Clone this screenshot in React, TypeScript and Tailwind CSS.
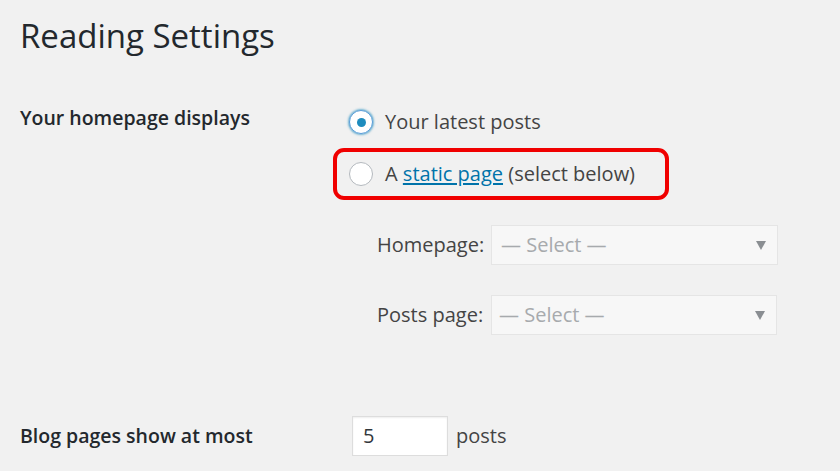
function Arrow() {
  return (
    <svg width="10" height="9" viewBox="0 0 10 9" className="shrink-0">
      <path d="M0 0h10L5 9z" fill="#8a8e92" />
    </svg>
  );
}

export default function App() {
  return (
    <div className="min-h-screen bg-[#f1f1f1] px-5 text-[#444] [font-family:'Open_Sans',sans-serif]">
      <h1 className="pt-[12px] text-[33px] leading-[48px] text-[#23282d]">Reading Settings</h1>

      <div className="mt-[47px] flex">
        <div className="w-[332px] text-[19.5px] font-semibold leading-[22px] text-[#23282d]">Your homepage displays</div>
        <div className="flex flex-col">
          <label className="-ml-[3px] mt-[3px] flex h-[24px] items-center gap-3 text-[20px]">
            <span className="flex h-[24px] w-[24px] items-center justify-center rounded-full border border-[#5b9dd9] bg-white shadow-[0_0_2px_1px_rgba(30,140,190,0.6)]">
              <span className="h-[9px] w-[9px] rounded-full bg-[#1e8cbe]" />
            </span>
            Your latest posts
          </label>

          <div className="-ml-[19px] mt-[14px] flex h-[52px] w-[336px] items-center rounded-[11px] border-4 border-[#f00000] pl-[12px]">
            <label className="flex items-center gap-3 text-[20px]">
              <span className="h-[24px] w-[24px] rounded-full border border-[#b4b9be] bg-white" />
              <span>
                A{' '}
                <a className="text-[#0073aa] underline underline-offset-2" href="#">
                  static page
                </a>{' '}
                (select below)
              </span>
            </label>
          </div>

          <div className="ml-[25px] mt-[25px] flex items-center">
            <span className="w-[114px] text-[20px]">Homepage:</span>
            <div className="flex h-[40px] w-[287px] items-center justify-between border border-[#e5e5e5] bg-[#f7f7f7] pl-[9px] pr-[11px] text-[20px] text-[#a7aaad]">
              <span>— Select —</span>
              <Arrow />
            </div>
          </div>

          <div className="ml-[25px] mt-[30px] flex items-center">
            <span className="w-[114px] text-[20px]">Posts page:</span>
            <div className="flex h-[40px] w-[286px] items-center justify-between border border-[#e5e5e5] bg-[#f7f7f7] pl-[7px] pr-[11px] text-[20px] text-[#a7aaad]">
              <span>— Select —</span>
              <Arrow />
            </div>
          </div>
        </div>
      </div>

      <div className="mt-[81px] flex items-center">
        <div className="w-[332px] text-[19.5px] font-semibold text-[#23282d]">Blog pages show at most</div>
        <div className="flex h-[40px] w-[96px] items-center border border-[#ddd] bg-white pl-[10px] text-[20px] text-[#32373c] shadow-[inset_0_1px_2px_rgba(0,0,0,0.07)]">
          5
        </div>
        <span className="ml-2 text-[20px]">posts</span>
      </div>
    </div>
  );
}
